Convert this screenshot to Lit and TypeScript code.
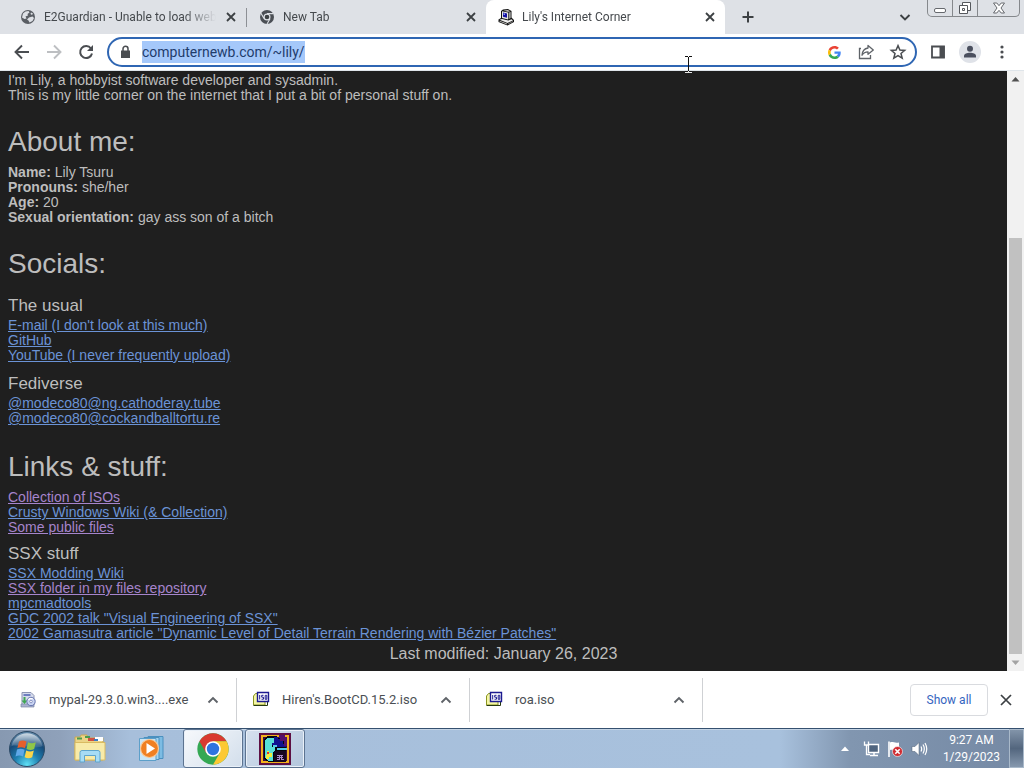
import { LitElement, html, css, svg, nothing } from "lit";
import { customElement, property, query } from "lit/decorators.js";
import { classMap } from "lit/directives/class-map.js";

const UI = css`"Segoe UI", Roboto, "Noto Sans", sans-serif`;

const icon = (size: number, box: string, body: unknown) =>
  html`<svg width=${size} height=${size} viewBox=${box} fill="none" aria-hidden="true">${body}</svg>`;

const globe = icon(16, "0 0 16 16", svg`
  <circle cx="8" cy="8" r="7" fill="#5a5e64"/>
  <path d="M3 4.5 5.5 2.5 8.5 2 9.5 3.5 7.5 5 8 6.5 5.5 7.5 6.5 9.5 4.5 10 2 8.5ZM9 8.5 12.5 7.5 14 9 12.5 12 9.5 13.5 8.5 11.5 7 10.5ZM11 3.5l2 1-1 1.5-1.5-1Z" fill="#dee1e6"/>`);

const chromeMono = icon(16, "0 0 16 16", svg`
  <circle cx="8" cy="8" r="7" fill="#4b4f55"/>
  <circle cx="8" cy="8" r="3.5" fill="#dee1e6"/>
  <circle cx="8" cy="8" r="2.3" fill="#3c4043"/>
  <path d="M8 4.6h6.2M5 9.6 2 4.3M11 9.7 8 15" stroke="#dee1e6" stroke-width="1.1"/>`);

const computer = icon(18, "0 0 18 18", svg`
  <path d="M4 3 6 1.500 11 1 14.500 3V9.500L17 12V14L10.500 17.500 1.500 14V11.500L4 10Z" fill="#111"/>
  <path d="M5 3.200 11 4.500V11.500L5 10Z" fill="#e6e6e0"/>
  <path d="M6.500 2.700 10.500 2 13.500 3.300 11 3.800Z" fill="#c8c8c4"/>
  <path d="M11.500 4.500 13.800 4V10L11.500 11.200Z" fill="#9a9a98"/>
  <path d="M6 4.500 10 5.400V9.700L6 8.700Z" fill="#1410a0"/>
  <path d="M6.500 5.300 8 5.600V7L6.500 6.700Z" fill="#8f9cff"/>
  <path d="M2.500 11.800 5 10.900 11.300 12.600 14.500 11.300 16 12.400 10.500 15Z" fill="#eee"/>
  <path d="M2.500 12.700 10 15.600V16.500L2.500 13.600Z" fill="#c4c4c0"/>
  <path d="M10.800 15.700 16 13.100V13.800L10.800 16.500Z" fill="#8a8a88"/>`);

const cross = (s = 16, w = 1.8) => icon(s, "0 0 16 16", svg`<path d="m4 4 8 8M12 4l-8 8" stroke="#3c4043" stroke-width=${w}/>`);
const plus = icon(16, "0 0 16 16", svg`<path d="M8 2.500v11M2.500 8h11" stroke="#3c4043" stroke-width="2"/>`);
const chevDown = icon(16, "0 0 16 16", svg`<path d="m3.500 6 4.500 4.500L12.500 6" stroke="#3c4043" stroke-width="1.900"/>`);
const chevUp = icon(16, "0 0 16 16", svg`<path d="m3.500 10.500 4.500-4.500 4.500 4.500" stroke="#5f6368" stroke-width="1.900"/>`);
const back = icon(20, "0 0 20 20", svg`<path d="M17 10H4M10 3.500 3.500 10l6.500 6.500" stroke="#4a4d51" stroke-width="1.900"/>`);
const forward = icon(20, "0 0 20 20", svg`<path d="M3 10h13M10 3.500l6.500 6.500-6.500 6.500" stroke="#bdbfc2" stroke-width="1.900"/>`);
const reload = icon(20, "0 0 20 20", svg`
  <path d="M15 6.500A6 6 0 1 0 16 11.500" stroke="#4a4d51" stroke-width="2"/>
  <path d="M17 3v6h-6Z" fill="#4a4d51"/>`);
const lock = icon(16, "0 0 16 16", svg`
  <path d="M4 6.500h9v7.500h-9Z" fill="#4a4d51"/>
  <path d="M6 7V4.800a2.500 2.500 0 0 1 5 0V7" stroke="#4a4d51" stroke-width="1.500"/>`);
const google = icon(13, "0 0 48 48", svg`
  <path fill="#ea4335" d="M24 9.500c3.540 0 6.710 1.220 9.210 3.600l6.850-6.850C35.900 2.380 30.470 0 24 0 14.620 0 6.510 5.380 2.560 13.220l7.980 6.190C12.430 13.720 17.740 9.500 24 9.500z"/>
  <path fill="#4285f4" d="M46.980 24.550c0-1.570-.15-3.090-.38-4.550H24v9.020h12.940c-.58 2.960-2.260 5.480-4.780 7.180l7.730 6c4.510-4.180 7.090-10.360 7.090-17.650z"/>
  <path fill="#fbbc05" d="M10.530 28.590c-.48-1.450-.76-2.990-.76-4.590s.27-3.140.76-4.590l-7.980-6.190C.92 16.460 0 20.120 0 24s.92 7.540 2.560 10.780l7.970-6.190z"/>
  <path fill="#34a853" d="M24 48c6.480 0 11.930-2.130 15.890-5.810l-7.730-6c-2.150 1.450-4.920 2.300-8.160 2.300-6.260 0-11.570-4.220-13.470-9.910l-7.980 6.190C6.510 42.620 14.620 48 24 48z"/>`);
const share = icon(18, "0 0 18 18", svg`
  <path d="M4 5.500H2.500v10h11V12" stroke="#5f6368" stroke-width="1.300"/>
  <path d="M11 2.500 16.300 7 11 11.300V8.800C8 8.800 6.300 10 5 12.300 5.300 8 7.500 5.500 11 5Z" stroke="#5f6368" stroke-width="1.300" stroke-linejoin="round"/>`);
const star = icon(18, "0 0 18 18", svg`<path d="m9 2.600 1.900 4.400 4.800.4-3.700 3.100 1.200 4.700L9 12.700l-4.200 2.500L6 10.500 2.300 7.400l4.800-.4Z" stroke="#4a4d51" stroke-width="1.500"/>`);
const sidePanel = icon(16, "0 0 16 16", svg`<path d="M2 2.500h12v11H2Z" stroke="#4a4d51" stroke-width="1.800"/><path d="M9.500 2h5v12h-5Z" fill="#4a4d51"/>`);
const profile = icon(22, "0 0 22 22", svg`
  <circle cx="11" cy="11" r="11" fill="#dfe2e8"/>
  <circle cx="11" cy="7.800" r="3" fill="#4a4f5e"/>
  <path d="M5 16.500V15c0-2 3-3.200 6-3.200s6 1.200 6 3.200v1.500Z" fill="#4a4f5e"/>`);
const dots = icon(16, "0 0 16 16", svg`<g fill="#4a4d51"><circle cx="8" cy="3" r="1.600"/><circle cx="8" cy="8" r="1.600"/><circle cx="8" cy="13" r="1.600"/></g>`);

const minimizeGlyph = icon(14, "0 0 14 14", svg`<rect x="1.500" y="7.500" width="11" height="4" rx="1.500" fill="#fff" stroke="#66696e"/>`);
const restoreGlyph = icon(14, "0 0 14 14", svg`
  <path d="M4.500 1.500h8v8h-8Z" fill="#fff" stroke="#55585d"/>
  <path d="M1.500 4.500h8v8h-8Z" fill="#fff" stroke="#55585d"/>
  <path d="M4.500 7.500h2v2h-2Z" stroke="#55585d"/>`);
const closeGlyph = icon(14, "0 0 14 14", svg`<path d="M1.500 2h3.300L7 4.700 9.200 2h3.300L9 7l3.500 5H9.200L7 9.300 4.800 12H1.500L5 7Z" fill="#fff" stroke="#66696e"/>`);

const installer = icon(18, "0 0 18 18", svg`
  <path d="M3 1.500h9l3 3V14H3Z" fill="#d5dbec" stroke="#8b93b3"/>
  <path d="M4.500 3h7v2h-7Z" fill="#6f7fc0"/>
  <path d="M2 13h13v3H2Z" fill="#aab2cf" stroke="#7d86a8" stroke-width=".7"/>
  <path d="M6.500 6v3.500h2L5.500 13 2.500 9.500H4.500V6Z" fill="#3fa653"/>
  <circle cx="12" cy="10.500" r="4.200" fill="#c9d4f2" stroke="#6573ad"/>
  <path d="M9.500 9a3 3 0 0 1 4-1" stroke="#fff" stroke-width="1.500"/>
  <circle cx="12" cy="10.500" r="1.300" fill="#fff" stroke="#6573ad" stroke-width=".7"/>`);
const iso = icon(18, "0 0 18 18", svg`
  <path d="M1.500 5 3.500 2.500H13V14H1.500Z" fill="#f4f6a4" stroke="#8a9420"/>
  <path d="M1.500 14.500H15.500V10" stroke="#26380f"/>
  <path d="M5.500 1.500h11v9h-11Z" fill="#fff" stroke="#1c1a90" stroke-width="1.400"/>
  <path d="M7.700 4v4.500M11.500 4.300H9.700v1.900h1.800v2H9.500M13.200 4.300h1.600v4h-1.600Z" stroke="#1c1a90" stroke-width="1"/>`);

const startOrb = icon(38, "0 0 38 38", svg`
  <defs>
    <radialGradient id="orb" cx=".5" cy=".95" r=".9"><stop offset="0" stop-color="#5fe0f5"/><stop offset=".4" stop-color="#1e7fb0"/><stop offset=".75" stop-color="#174a78"/><stop offset="1" stop-color="#5f87a8"/></radialGradient>
    <linearGradient id="gloss" x2="0" y2="1"><stop offset="0" stop-color="#fff" stop-opacity=".7"/><stop offset="1" stop-color="#fff" stop-opacity=".1"/></linearGradient>
  </defs>
  <circle cx="19" cy="19" r="17.500" fill="url(#orb)" stroke="#2c4a66"/>
  <path d="M3.500 16a15.800 15.800 0 0 1 31 0C28 20 12 14 3.500 16Z" fill="url(#gloss)"/>
  <path d="M11 11.500c3-1.700 5-1.200 7.500 0L17 18.300c-2.500-1.300-4.800-1.500-7.600-.2Z" fill="#e5602c"/>
  <path d="M20 12.200c2.600 1.300 5 1.300 7.800 0L26.200 19c-2.600 1.400-5 1.200-7.700 0Z" fill="#8fc648"/>
  <path d="M9 19.600c2.800-1.300 5-1 7.600.2L15 26.500c-2.600-1.200-4.700-1.300-7.500 0Z" fill="#5fa8e8"/>
  <path d="M18.200 20.500c2.600 1.200 5 1.300 7.600 0l-1.600 6.700c-2.700 1.400-5 1.200-7.600 0Z" fill="#fbd54a"/>`);
const explorer = icon(34, "0 0 34 34", svg`
  <path d="M2 5h5l1-2h6l1 3h15v22H2Z" fill="#ecd486" stroke="#c9a953"/>
  <path d="M4 6.500h5M12 5h5" stroke="#4c9b4f" stroke-width="2"/>
  <path d="M15 6h8v3h-8Z" fill="#cf5142"/><path d="M22 5h8v4h-8Z" fill="#fff"/><path d="M21 8h4" stroke="#3b7dc4" stroke-width="2"/>
  <path d="M2 10.500h30v17.500H2Z" fill="#f8eba9" stroke="#d9bb62"/>
  <path d="M7 30V20.500q0-2 2-2h16q2 0 2 2V30h-4.500v-6.500h-11V30Z" fill="#a7dcf5" stroke="#5fa5cc"/>`);
const mediaPlayer = icon(32, "0 0 32 32", svg`
  <path d="M12 3.500h15v22H12Z" fill="#7dbce3" stroke="#4b90bf"/>
  <path d="M8 4.500h15v22H8Z" fill="#a5d4ef" stroke="#4b90bf"/>
  <path d="M3.500 5.500h16.500v22H3.500Z" fill="#c9e5f6" stroke="#5c9fc9"/>
  <circle cx="13.500" cy="15.500" r="9" fill="#f08022" stroke="#f9c896" stroke-width="1.200"/>
  <path d="M10.500 10 19 15.500 10.500 21Z" fill="#fff"/>`);
const chrome = icon(32, "0 0 48 48", svg`
  <circle cx="24" cy="24" r="23.500" fill="#34a853"/>
  <path d="M3.650 12.250 13.800 29.900 24 24 24 12.250H44.350A23.500 23.500 0 0 0 3.650 12.250Z" fill="#d93a30"/>
  <path d="M24 12.250H44.350A23.500 23.500 0 0 1 24 47.500L34.200 29.900Z" fill="#fcc934"/>
  <circle cx="24" cy="24" r="11.700" fill="#fff"/>
  <circle cx="24" cy="24" r="9.300" fill="#2f74e0"/>`);
const gameTile = icon(32, "0 0 32 32", svg`
  <g shape-rendering="crispEdges">
    <path d="M0 0h32v32H0Z" fill="#5d1043"/>
    <path d="M2 2h28v28H2Z" fill="#f2b21c"/>
    <path d="M4 4h24v24H4Z" fill="#3a0d40"/>
    <path d="M5 6l3-3h10v2h7v2h2v22H10l-5-3Z" fill="#05050c"/>
    <path d="M6 7l3-2h6v5h-2v4h3v5h-2v9h-4l-4-3Z" fill="#58dfd8"/>
    <path d="M15 4h4v2h5v5h3v3h-9v-2h-5v-2h2Z" fill="#10128f"/>
    <path d="M14 12h4v2h-4ZM18 15h10v2H18Z" fill="#56c9e8"/>
    <path d="M20 2h6v2h2v9h-3V8h-4Z" fill="#54106a"/>
    <path d="M8 18h2v2h3v4h-3v2H7v-4h1Z" fill="#f1ed3e"/>
    <path d="M8 19h2v2H8Z" fill="#df3c2c"/>
    <path d="M15 18h12v11H15Z" fill="#170720"/>
    <path d="M18 22h6v1h-6ZM20 22h1v5h-1ZM22 22h1v5h-1ZM18 24h6v1h-6ZM18 26h2v1h-2ZM23 26h2v1h-2Z" fill="#a98cc8"/>
  </g>`);

const trayArrow = icon(10, "0 0 10 10", svg`<path d="M5 2.500 9 7H1Z" fill="#fff"/>`);
const network = icon(18, "0 0 18 18", svg`
  <path d="M6.500 4.500h10v8h-10Z" fill="#50657f" stroke="#fff" stroke-width="1.400"/>
  <path d="M8 15.500h8M12 13v2" stroke="#fff" stroke-width="1.500"/>
  <path d="M2.500 1.500v3.500h4V1.500M4.500 5v9.500H8" stroke="#fff" stroke-width="1.300"/>`);
const flag = icon(18, "0 0 18 18", svg`
  <path d="M3 1.500V17" stroke="#fff" stroke-width="1.600"/>
  <path d="M4 2.500c3-1.500 4 1 9 0V10c-4 1-6-1-9 0Z" fill="#fff"/>
  <circle cx="11.500" cy="11.500" r="5" fill="#d02b31" stroke="#fff" stroke-width=".6"/>
  <path d="m9.300 9.300 4.400 4.400M13.700 9.300l-4.400 4.400" stroke="#fff" stroke-width="1.600"/>`);
const speaker = icon(18, "0 0 18 18", svg`
  <path d="M2 6.500h3l4-4v13l-4-4H2Z" fill="#fff" stroke="#4b5c72" stroke-width=".5"/>
  <path d="M11 6.500q1.300 2.500 0 5M13 4.500q2.600 4.500 0 9M15 3q3.500 6 0 12" stroke="#fff" stroke-width="1.200"/>`);

@customElement("browser-tab")
class BrowserTab extends LitElement {
  @property() label = "";
  @property({ attribute: false }) favicon: unknown = nothing;
  @property({ type: Boolean, reflect: true }) active = false;
  @property({ type: Boolean, reflect: true }) divided = false;

  static styles = css`
    :host { display: flex; flex: 0 1 239px; min-width: 0; height: 34px; }
    .tab { display: flex; flex: 1; min-width: 0; align-items: center; gap: 7px; padding: 0 7px 0 11px; }
    .active { background: #fff; border-radius: 8px 8px 0 0; }
    .icon { display: flex; justify-content: center; width: 18px; flex: none; }
    .label { flex: 1; min-width: 0; overflow: hidden; white-space: nowrap; font: 12px/18px ${UI}; color: #45494d;
      mask-image: linear-gradient(90deg, #000 calc(100% - 32px), transparent); }
    .close { display: flex; flex: none; padding: 0; border: 0; background: none; }
    .rule { align-self: center; width: 1px; height: 19px; background: #8d9095; }
  `;

  render() {
    return html`
      <div class=${classMap({ tab: true, active: this.active })} role="tab" aria-selected=${this.active}>
        <span class="icon">${this.favicon}</span>
        <span class="label">${this.label}</span>
        <button class="close" aria-label="Close tab">${cross()}</button>
      </div>
      ${this.divided ? html`<span class="rule"></span>` : nothing}
    `;
  }
}

@customElement("tool-bar")
class ToolBar extends LitElement {
  @query("input") address!: HTMLInputElement;

  static styles = css`
    :host { display: flex; flex: none; align-items: center; height: 36px; padding: 0 6px; background: #fff; border-bottom: 1px solid #dfe5ea; }
    .tool { display: flex; flex: none; width: 32px; height: 28px; align-items: center; justify-content: center; padding: 0; border: 0; background: none; }
    .omnibox { display: flex; flex: 1; min-width: 0; box-sizing: border-box; height: 30px; align-items: center; margin: 0 5px; padding: 0 1px 0 8px; border: 2px solid #2f66b3; border-radius: 15px; background: #fff; }
    .lock { display: flex; flex: none; margin-right: 9px; }
    .address { flex: 1; min-width: 0; height: 22px; padding: 0; border: 0; outline: 0; background: none; font: 14px/22px ${UI}; color: #36393d; }
    .address::selection { background: #a5c8fa; color: #1f3c6c; }
  `;

  firstUpdated() {
    this.address.focus();
    this.address.select();
  }

  render() {
    return html`
      <button class="tool" aria-label="Back">${back}</button>
      <button class="tool" aria-label="Forward">${forward}</button>
      <button class="tool" aria-label="Reload">${reload}</button>
      <div class="omnibox">
        <span class="lock">${lock}</span>
        <input class="address" type="text" aria-label="Address" spellcheck="false" value="computernewb.com/~lily/" />
        <button class="tool" aria-label="Search Google">${google}</button>
        <button class="tool" aria-label="Share">${share}</button>
        <button class="tool" aria-label="Bookmark">${star}</button>
      </div>
      <button class="tool" aria-label="Side panel">${sidePanel}</button>
      <button class="tool" aria-label="Profile">${profile}</button>
      <button class="tool" aria-label="Menu">${dots}</button>
    `;
  }
}

type PageLink = { text: string; visited?: boolean };

@customElement("home-page")
class HomePage extends LitElement {
  static styles = css`
    :host { display: flex; flex: 1; min-height: 0; background: #1f1f1f; }
    .view { display: flex; flex: 1; min-width: 0; flex-direction: column; justify-content: flex-end; overflow: hidden; padding: 0 8px;
      font: 14px/15px "Liberation Sans", Arial, sans-serif; color: #bdbdbd; }
    h1 { margin: 23px 0 7px; font-size: 28px; line-height: 32px; font-weight: 400; }
    h2 { margin: 9px 0 2px; font-size: 17px; line-height: 20px; font-weight: 400; }
    p { margin: 0; }
    .group { padding-bottom: 2px; }
    ul { margin: 0; padding: 0; list-style: none; }
    a { color: #6b93d6; text-decoration: underline; }
    .visited { color: #a684cc; }
    footer { margin: 4px 0 8px; font-size: 16px; line-height: 18px; text-align: center; }
    .scrollbar { display: flex; flex: none; flex-direction: column; width: 17px; background: #f1f1f1; }
    .arrow { display: flex; height: 17px; align-items: center; justify-content: center; }
    .before { flex: 150; }
    .thumb { flex: 416; margin: 0 2px; background: #c1c1c1; }
  `;

  private links(items: PageLink[]) {
    return html`<ul>${items.map((l) => html`<li><a href="#" class=${classMap({ visited: !!l.visited })}>${l.text}</a></li>`)}</ul>`;
  }

  render() {
    return html`
      <main class="view">
        <p>I'm Lily, a hobbyist software developer and sysadmin.</p>
        <p>This is my little corner on the internet that I put a bit of personal stuff on.</p>
        <h1>About me:</h1>
        <p><b>Name:</b> Lily Tsuru</p>
        <p><b>Pronouns:</b> she/her</p>
        <p><b>Age:</b> 20</p>
        <p><b>Sexual orientation:</b> gay ass son of a bitch</p>
        <h1>Socials:</h1>
        <section class="group">
          <h2>The usual</h2>
          ${this.links([{ text: "E-mail (I don't look at this much)" }, { text: "GitHub" }, { text: "YouTube (I never frequently upload)" }])}
        </section>
        <section class="group">
          <h2>Fediverse</h2>
          ${this.links([{ text: "@modeco80@ng.cathoderay.tube" }, { text: "@modeco80@cockandballtortu.re" }])}
        </section>
        <h1>Links &amp; stuff:</h1>
        ${this.links([{ text: "Collection of ISOs", visited: true }, { text: "Crusty Windows Wiki (& Collection)" }, { text: "Some public files", visited: true }])}
        <h2>SSX stuff</h2>
        ${this.links([
          { text: "SSX Modding Wiki" },
          { text: "SSX folder in my files repository", visited: true },
          { text: "mpcmadtools" },
          { text: 'GDC 2002 talk "Visual Engineering of SSX"' },
          { text: '2002 Gamasutra article "Dynamic Level of Detail Terrain Rendering with Bézier Patches"' },
        ])}
        <footer>Last modified: January 26, 2023</footer>
      </main>
      <div class="scrollbar" aria-hidden="true">
        <span class="arrow">${icon(9, "0 0 9 9", svg`<path d="M4.500 2 8.500 6.500h-8Z" fill="#505050"/>`)}</span>
        <span class="before"></span>
        <span class="thumb"></span>
        <span class="arrow">${icon(9, "0 0 9 9", svg`<path d="M4.500 7 8.500 2.500h-8Z" fill="#a3a3a3"/>`)}</span>
      </div>
    `;
  }
}

@customElement("download-shelf")
class DownloadShelf extends LitElement {
  static styles = css`
    :host { display: flex; flex: none; align-items: center; height: 57px; padding-right: 8px; background: #fff; font: 13px/20px ${UI}; color: #4b4f54; }
    .item { display: flex; flex: 0 1 233px; box-sizing: border-box; min-width: 0; height: 44px; align-items: center; padding: 0 15px; border-right: 1px solid #cfd1d4; }
    .item:first-child { flex-basis: 237px; padding-left: 19px; }
    .file { display: flex; flex: 1; min-width: 0; align-items: center; gap: 12px; padding: 0; border: 0; background: none; font: inherit; color: inherit; white-space: nowrap; }
    .more, .dismiss { display: flex; flex: none; padding: 0; border: 0; background: none; }
    .spacer { flex: 1; }
    .all { box-sizing: border-box; height: 32px; width: 78px; margin-right: 8px; padding: 0; border: 1px solid #d9dbdf; border-radius: 4px; background: #fff; font: 12px/18px ${UI}; color: #3565c0; }
  `;

  render() {
    const files = [
      { name: "mypal-29.3.0.win3....exe", art: installer },
      { name: "Hiren's.BootCD.15.2.iso", art: iso },
      { name: "roa.iso", art: iso },
    ];
    return html`
      ${files.map((f) => html`
        <div class="item">
          <button class="file">${f.art}<span>${f.name}</span></button>
          <button class="more" aria-label="More options">${chevUp}</button>
        </div>`)}
      <span class="spacer"></span>
      <button class="all">Show all</button>
      <button class="dismiss" aria-label="Close downloads">${cross(20, 1.4)}</button>
    `;
  }
}

@customElement("task-bar")
class TaskBar extends LitElement {
  static styles = css`
    :host { display: flex; flex: none; box-sizing: border-box; height: 40px; align-items: stretch; padding-left: 8px; border-top: 1px solid #35506f;
      background: linear-gradient(90deg, #8799b1 0, #8fa1ba 60px, #a7bfdb 130px, #a8c1dd 780px, #8196b0 850px, #7589a4 100%);
      box-shadow: inset 0 1px #c5d5e6; font: 12px/17px ${UI}; color: #fff; }
    button { display: flex; align-items: center; justify-content: center; padding: 0; border: 0; background: none; }
    .start { width: 38px; margin-right: 13px; }
    .pin { width: 62px; }
    .app { width: 60px; box-sizing: border-box; margin-right: 2px; border: 1px solid #5c7390; border-radius: 3px; box-shadow: inset 0 0 0 1px #e9f0f8; background: linear-gradient(135deg, #d6e1ee, #b3c6dc); }
    .front { background: linear-gradient(135deg, #f7f9fc, #d2deeb); }
    .spacer { flex: 1; }
    .tray { display: flex; align-items: center; gap: 6px; margin-right: 15px; }
    .tray :first-child { margin-right: 3px; }
    .clock { display: flex; flex-direction: column; justify-content: center; margin-right: 9px; text-align: center; }
    .desktop { width: 15px; border: 1px solid #a9b9ca; background: linear-gradient(#8294a9, #53667e 50%, #8698ae); }
  `;

  render() {
    return html`
      <button class="start" aria-label="Start">${startOrb}</button>
      <button class="pin" aria-label="Explorer">${explorer}</button>
      <button class="pin" aria-label="Media Player">${mediaPlayer}</button>
      <button class="app front" aria-label="Chrome">${chrome}</button>
      <button class="app" aria-label="Game">${gameTile}</button>
      <span class="spacer"></span>
      <div class="tray">
        <button aria-label="Hidden icons">${trayArrow}</button>
        ${network}${flag}${speaker}
      </div>
      <div class="clock"><span>9:27 AM</span><span>1/29/2023</span></div>
      <button class="desktop" aria-label="Show desktop"></button>
    `;
  }
}

@customElement("app-root")
class AppRoot extends LitElement {
  static styles = css`
    :host { display: flex; position: relative; flex-direction: column; height: 100vh; overflow: hidden; }
    .strip { display: flex; flex: none; height: 34px; padding-left: 8px; background: #dee1e6; }
    .tabs { display: flex; flex: 0 1 717px; min-width: 0; }
    .add, .search { display: flex; width: 28px; align-items: center; justify-content: center; padding: 0; border: 0; background: none; }
    .add { margin-left: 9px; }
    .search { margin: 0 8px 0 auto; }
    .window { display: flex; flex: none; align-self: flex-start; box-sizing: border-box; height: 17px; margin-right: 4px; border: 1px solid #85888c; border-top: 0; border-radius: 0 0 5px 5px; }
    .window button { display: flex; width: 25px; align-items: center; justify-content: center; padding: 0; border: 0; border-right: 1px solid #85888c; background: none; }
    .window .shut { width: 41px; border-right: 0; }
    .pointer { position: absolute; left: 684px; top: 56px; display: flex; pointer-events: none; }
  `;

  render() {
    return html`
      <header class="strip">
        <div class="tabs" role="tablist">
          <browser-tab label="E2Guardian - Unable to load web" .favicon=${globe} divided></browser-tab>
          <browser-tab label="New Tab" .favicon=${chromeMono}></browser-tab>
          <browser-tab label="Lily's Internet Corner" .favicon=${computer} active></browser-tab>
        </div>
        <button class="add" aria-label="New tab">${plus}</button>
        <button class="search" aria-label="Search tabs">${chevDown}</button>
        <div class="window">
          <button aria-label="Minimize">${minimizeGlyph}</button>
          <button aria-label="Restore">${restoreGlyph}</button>
          <button class="shut" aria-label="Close">${closeGlyph}</button>
        </div>
      </header>
      <tool-bar></tool-bar>
      <home-page></home-page>
      <download-shelf></download-shelf>
      <task-bar></task-bar>
      <span class="pointer">
        <svg width="9" height="17" viewBox="0 0 9 17" fill="none" aria-hidden="true">
          <path d="M4.500 14V17M1 16.500h7" stroke="#e8e8e8"/>
          <path d="M1 .5h3M5 .5h3M4.500 1v14M1 15.500h3M5 15.500h3" stroke="#111"/>
        </svg>
      </span>
    `;
  }
}
